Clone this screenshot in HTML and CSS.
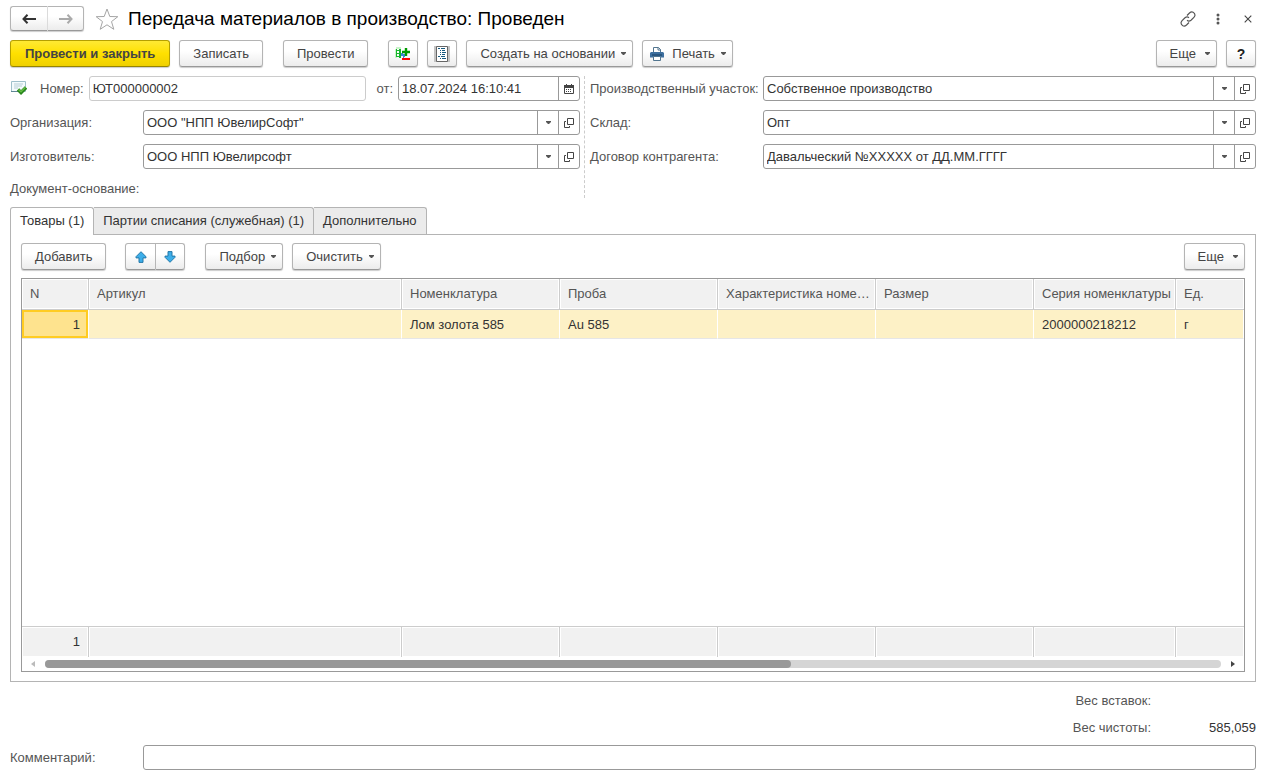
FILE: index.html
```html
<!DOCTYPE html>
<html lang="ru">
<head>
<meta charset="utf-8">
<title>Передача материалов в производство: Проведен</title>
<link rel="stylesheet" href="styles.css">
</head>
<body>
<svg class="defs" aria-hidden="true">
  <symbol id="open" viewBox="0 0 10 10"><path d="M3.500 .5h6v6h-6zM2 3.500H.5v6h5V8" fill="none" stroke="#444"/></symbol>
  <symbol id="caret" viewBox="0 0 5 3"><path d="M0 0h5v1L3 3H2L0 1z" fill="#555"/></symbol>
</svg>
<main class="page">
  <header class="title-bar">
    <div class="joined">
      <button class="btn nav" aria-label="Назад"><svg width="14" height="10" viewBox="0 0 14 10"><path d="M5.500 .8 1.500 5l4 4.200M2 5h12" fill="none" stroke="#333" stroke-width="2"/></svg></button>
      <button class="btn nav" aria-label="Вперед"><svg width="14" height="10" viewBox="0 0 14 10"><path d="M8.500 .8 12.500 5l-4 4.200M12 5H0" fill="none" stroke="#aaa" stroke-width="2"/></svg></button>
    </div>
    <button class="plain star" aria-label="В избранное"><svg width="24" height="22" viewBox="0 0 24 22"><path d="M12 1l2.800 7.500 8 .2-6.300 4.900 2.300 7.700-6.800-4.500-6.800 4.500 2.300-7.700L1.200 8.700l8-.2z" fill="#fff" stroke="#a5a5a5"/></svg></button>
    <h1 class="title">Передача материалов в производство: Проведен</h1>
    <div class="window-tools">
      <button class="plain" aria-label="Ссылка"><svg width="16" height="16" viewBox="0 0 16 16"><g fill="none" stroke="#555" stroke-width="1.200"><path d="M7 4.500 9.500 2q1.800-1.600 3.600-.8 2.200 1.200 1.800 3.400-.3 1-1 1.700L11 9.200q-2 1.600-4 .1M9 11.500 6.500 14q-1.800 1.600-3.600.8Q.7 13.600 1.100 11.400q.3-1 1-1.700L5 6.800q2-1.600 4-.1"/></g></svg></button>
      <button class="plain" aria-label="Меню"><svg width="4" height="12" viewBox="0 0 4 12"><g fill="#555"><circle cx="2" cy="2" r="1.500"/><circle cx="2" cy="6" r="1.500"/><circle cx="2" cy="10" r="1.500"/></g></svg></button>
      <button class="plain" aria-label="Закрыть"><svg width="8" height="8" viewBox="0 0 8 8"><path d="M.7.7l6.600 6.600M7.300.7.7 7.300" stroke="#444" stroke-width="1.100"/></svg></button>
    </div>
  </header>

  <div class="toolbar">
    <button class="btn primary">Провести и закрыть</button>
    <button class="btn">Записать</button>
    <button class="btn spaced">Провести</button>
    <button class="btn icon spaced" aria-label="Движения документа"><svg width="18" height="16" viewBox="0 0 18 16"><path d="M2 1h5v2H2zM1 3h2v9H1z" fill="#c9f3c9"/><path d="M2.500 3v8M2 4.500h3M2 7.500h3M2 10.500h3" stroke="#18b52c"/><path d="M5 3h2v9H5z" fill="#12b82c"/><path d="M7 7h2v1h2v3h-1v1H9v-2H7z" fill="#3b86d6"/><path d="M12 2v8M8 6h8" stroke="#009b00" stroke-width="2.400"/><path d="M8 13h8" stroke="#f00" stroke-width="2"/></svg></button>
    <button class="btn icon" aria-label="Журнал"><svg width="16" height="18" viewBox="0 0 16 18"><path d="M0 1h16v16H0z" fill="#c4c4c4"/><path d="M2.500 1.500h11v15h-11z" fill="#fff" stroke="#666"/><path d="M4 3.500h2M7 3.500h4M6 5.500h1M8 5.500h3M6 7.500h1M8 7.500h4M6 9.500h1M8 9.500h3M4 11.500h2M7 11.500h4M6 13.500h1M8 13.500h4" stroke="#17597f"/></svg></button>
    <button class="btn menu">Создать на основании<svg class="caret"><use href="#caret"/></svg></button>
    <button class="btn menu print"><svg width="14" height="14" viewBox="0 0 14 14"><path d="M3.500 6V.5h5l2 2V6" fill="#fff" stroke="#52758f"/><path d="M8 .5V3h3" fill="none" stroke="#52758f"/><path d="M1 5h12l1 1v4.500H0V6z" fill="#3d6f9e"/><path d="M2 8h10" stroke="#173f63"/><path d="M3.500 9.500h7v4h-7z" fill="#fff" stroke="#52758f"/></svg>Печать<svg class="caret"><use href="#caret"/></svg></button>
    <button class="btn menu more">Еще<svg class="caret"><use href="#caret"/></svg></button>
    <button class="btn icon help">?</button>
  </div>

  <div class="form">
    <div class="column">
      <div class="row number-row">
        <svg width="17" height="16" viewBox="0 0 17 16"><path d="M1.500 .5h14v10h-14z" fill="#f4fbfd" stroke="#9fc0cb"/><path d="M1 10.500h9" stroke="#5f8694"/><path d="M4 3h9M4 5h8M4 7h4" stroke="#b7cdd5"/><path d="M8 8.500l3 3 5-5" fill="none" stroke="#27851a" stroke-width="3.400"/><path d="M8.500 8.500l2.500 2.300 4.500-4.500" fill="none" stroke="#63bd43" stroke-width="1.500"/></svg>
        <label for="number">Номер:</label>
        <div class="field readonly"><input id="number" value="ЮТ000000002" readonly></div>
        <label class="from" for="date">от:</label>
        <div class="field date"><input id="date" value="18.07.2024 16:10:41"><button class="side" aria-label="Календарь"><svg width="10" height="10" viewBox="0 0 10 10"><path d="M.5 1.500h9v8h-9z" fill="#fff" stroke="#444"/><path d="M0 1h10v3H0zM2 0h1v1H2zM7 0h1v1H7z" fill="#444"/><path d="M2 5.500h1M4 5.500h1M6 5.500h1M2 7.500h1M4 7.500h1M6 7.500h1" stroke="#444"/></svg></button></div>
      </div>
      <div class="row"><label for="org">Организация:</label><div class="field"><input id="org" value='ООО "НПП ЮвелирСофт"'><button class="side" aria-label="Выбрать"><svg class="caret"><use href="#caret"/></svg></button><button class="side" aria-label="Открыть"><svg class="open"><use href="#open"/></svg></button></div></div>
      <div class="row"><label for="maker">Изготовитель:</label><div class="field"><input id="maker" value="ООО НПП Ювелирсофт"><button class="side" aria-label="Выбрать"><svg class="caret"><use href="#caret"/></svg></button><button class="side" aria-label="Открыть"><svg class="open"><use href="#open"/></svg></button></div></div>
      <div class="base">Документ-основание:</div>
    </div>
    <div class="column right">
      <div class="row"><label for="site">Производственный участок:</label><div class="field"><input id="site" value="Собственное производство"><button class="side" aria-label="Выбрать"><svg class="caret"><use href="#caret"/></svg></button><button class="side" aria-label="Открыть"><svg class="open"><use href="#open"/></svg></button></div></div>
      <div class="row"><label for="store">Склад:</label><div class="field"><input id="store" value="Опт"><button class="side" aria-label="Выбрать"><svg class="caret"><use href="#caret"/></svg></button><button class="side" aria-label="Открыть"><svg class="open"><use href="#open"/></svg></button></div></div>
      <div class="row"><label for="contract">Договор контрагента:</label><div class="field"><input id="contract" value="Давальческий №XXXXX от ДД.ММ.ГГГГ"><button class="side" aria-label="Выбрать"><svg class="caret"><use href="#caret"/></svg></button><button class="side" aria-label="Открыть"><svg class="open"><use href="#open"/></svg></button></div></div>
    </div>
  </div>

  <div class="tabs" role="tablist">
    <button class="tab active" role="tab" aria-selected="true">Товары (1)</button>
    <button class="tab" role="tab" aria-selected="false">Партии списания (служебная) (1)</button>
    <button class="tab" role="tab" aria-selected="false">Дополнительно</button>
  </div>
  <section class="panel">
    <div class="toolbar panel-tools">
      <button class="btn">Добавить</button>
      <div class="joined arrows">
        <button class="btn" aria-label="Вверх"><svg width="12" height="12" viewBox="0 0 12 12"><path d="M6 .7l5 5v1.200H8v4.500H4V6.900H1V5.700z" fill="#3daee9" stroke="#2478a8"/></svg></button>
        <button class="btn" aria-label="Вниз"><svg width="12" height="12" viewBox="0 0 12 12"><path d="M6 11.300l5-5V5.100H8V.6H4v4.500H1v1.200z" fill="#3daee9" stroke="#2478a8"/></svg></button>
      </div>
      <button class="btn menu">Подбор<svg class="caret"><use href="#caret"/></svg></button>
      <button class="btn menu">Очистить<svg class="caret"><use href="#caret"/></svg></button>
      <button class="btn menu more">Еще<svg class="caret"><use href="#caret"/></svg></button>
    </div>
    <div class="grid">
      <table>
        <colgroup><col class="c-n"><col><col class="c-m"><col class="c-m"><col class="c-m"><col class="c-m"><col class="c-s"><col class="c-u"></colgroup>
        <thead><tr><th>N</th><th>Артикул</th><th>Номенклатура</th><th>Проба</th><th>Характеристика номе…</th><th>Размер</th><th>Серия номенклатуры</th><th>Ед.</th></tr></thead>
        <tbody>
          <tr class="selected"><td class="num current">1</td><td></td><td>Лом золота 585</td><td>Au 585</td><td></td><td></td><td>2000000218212</td><td>г</td></tr>
          <tr class="blank"><td colspan="8"></td></tr>
        </tbody>
        <tfoot><tr><td class="num">1</td><td></td><td></td><td></td><td></td><td></td><td></td><td></td></tr></tfoot>
      </table>
      <div class="scroll">
        <svg width="4" height="6" viewBox="0 0 4 6"><path d="M4 0v6L0 3z" fill="#bbb"/></svg>
        <div class="track"><div class="thumb"></div></div>
        <svg width="4" height="6" viewBox="0 0 4 6"><path d="M0 0v6l4-3z" fill="#444"/></svg>
      </div>
    </div>
  </section>

  <dl class="totals">
    <dt>Вес вставок:</dt><dd></dd>
    <dt>Вес чистоты:</dt><dd>585,059</dd>
  </dl>
  <div class="row"><label for="comment">Комментарий:</label><div class="field"><input id="comment"></div></div>
</main>
</body>
</html>
```
FILE: styles.css
```css
* { box-sizing: border-box; }
body {
  margin: 0;
  background: #fff;
  color: #333;
  font: 13px/16px "Liberation Sans", Arial, sans-serif;
}
button, input { font: inherit; color: inherit; }
svg { flex: none; display: block; }
.defs { position: absolute; width: 0; height: 0; }
.page {
  display: flex;
  flex-direction: column;
  min-height: 100vh;
  padding: 6px 14px 8px 10px;
}

.title-bar { display: flex; align-items: center; height: 25px; }
.title { margin: 0 0 0 9px; font-size: 19px; line-height: 24px; font-weight: 400; color: #000; }
.plain { display: flex; justify-content: center; padding: 0; border: 0; background: none; }
.star { margin-left: 11px; }
.window-tools { display: flex; align-items: center; gap: 14px; margin-left: auto; }
.window-tools .plain { width: 16px; }

.btn {
  display: flex;
  align-items: center;
  justify-content: center;
  height: 27px;
  padding: 0 13px;
  border: 1px solid #b4b4b4;
  border-bottom-color: #999;
  border-radius: 3px;
  background: linear-gradient(#fff 40%, #ececec);
  box-shadow: 0 1px 1px #ccc;
  color: #444;
  white-space: nowrap;
}
.joined { display: flex; }
.joined .btn:first-child { border-radius: 3px 0 0 3px; }
.joined .btn:last-child { border-left: 0; border-radius: 0 3px 3px 0; }
.nav { width: 36px; height: 25px; padding: 0; }
.nav:first-child { border-right-color: #ddd; width: 38px; }
.primary {
  padding: 0 14px;
  border-color: #b59f00;
  border-bottom-color: #968400;
  background: linear-gradient(#ffe934, #ffe000 50%, #efd000);
  font-weight: 700;
}
.icon { width: 30px; padding: 0; }
.help { font-weight: 700; font-size: 14px; color: #222; }
.caret { width: 5px; height: 3px; }
.open { width: 10px; height: 10px; }
.toolbar { display: flex; gap: 9px; margin-top: 9px; }
.toolbar .spaced { margin-left: 11px; }
.menu { padding-right: 6px; gap: 6px; }
.print { padding-left: 7px; }
.print svg:first-child { margin-right: 2px; }
.more { margin-left: auto; gap: 9px; }

.form { display: grid; grid-template-columns: 574fr 672fr; margin-top: 9px; }
.column { display: flex; flex-direction: column; gap: 9px; padding-right: 4px; }
.column.right { border-left: 1px dashed #ccc; padding: 0 0 0 5px; }
.row { display: flex; align-items: center; }
.row label { flex: none; width: 133px; color: #555; }
.right .row label { width: 173px; }
.row .field {
  display: flex;
  flex: 1;
  min-width: 0;
  height: 25px;
  border: 1px solid #999;
  border-radius: 3px;
  background: #fff;
}
.field input {
  flex: 1;
  min-width: 0;
  padding: 0 3px;
  border: 0;
  background: none;
  outline: 0;
}
.side {
  display: flex;
  align-items: center;
  justify-content: center;
  width: 21px;
  padding: 0;
  border: 0;
  border-left: 1px solid #999;
  background: none;
}
.number-row label { width: auto; margin: 0 5px 0 13px; }
.number-row .from { margin: 0 5px 0 10px; }
.row .readonly { border-color: #ccc; }
.row .date { flex: 0 0 182px; }
.base { padding: 3px 0 1px; height: 20px; color: #555; }

.tabs { display: flex; margin-top: 9px; }
.tab {
  height: 27px;
  padding: 0 9px;
  border: 1px solid #b4b4b4;
  border-width: 1px 1px 0 0;
  background: #ebebeb;
  border-radius: 0 3px 0 0;
}
.tab.active {
  height: 28px;
  margin-bottom: -1px;
  padding-bottom: 1px;
  border-left-width: 1px;
  border-radius: 3px 3px 0 0;
  background: #fff;
  z-index: 1;
}
.panel {
  display: flex;
  flex: 1;
  flex-direction: column;
  padding: 8px 10px 9px;
  border: 1px solid #b4b4b4;
}
.panel-tools { margin: 0; }
.arrows { margin: 0 11px 0 10px; }
.arrows .btn { width: 29px; padding: 0; }
.arrows .btn:first-child { width: 31px; }
.grid {
  display: flex;
  flex: 1;
  flex-direction: column;
  margin-top: 8px;
  border: 1px solid #999;
}
table { flex: 1; width: 100%; table-layout: fixed; border-collapse: separate; border-spacing: 0; }
.c-n { width: 67px; }
.c-m { width: 158px; }
.c-s { width: 142px; }
.c-u { width: 68px; }
th, td {
  padding: 0 8px;
  overflow: hidden;
  text-align: left;
  text-overflow: ellipsis;
  white-space: nowrap;
  font-weight: 400;
}
th { height: 31px; padding-right: 2px; color: #555; border-bottom: 1px solid #ccc; }
th, tfoot td {
  background: #f1f1f1;
  border-right: 1px solid #ccc;
  box-shadow: inset 0 0 0 1px #fff;
}
tr > :last-child { border-right: 0; }
.selected td {
  height: 29px;
  padding-top: 1px;
  background: #fdf1c6;
  border-right: 1px solid #fff;
  border-bottom: 1px solid #e6e6e6;
}
.selected .current { background: #fee38e; box-shadow: inset 0 0 0 2px #fc2; }
td.num { text-align: right; }
tfoot td { height: 31px; border-top: 1px solid #ccc; }
.scroll { display: flex; align-items: center; height: 14px; padding: 0 9px; gap: 10px; }
.track { flex: 1; height: 8px; border-radius: 4px; background: #d5d5d5; }
.thumb { width: 63.4%; height: 8px; border-radius: 4px; background: #999; }

.totals {
  display: grid;
  grid-template-columns: auto 105px;
  margin: 11px 0 9px;
  row-gap: 11px;
  text-align: right;
}
.totals dt { color: #555; }
.totals dd { margin: 0; }
```
